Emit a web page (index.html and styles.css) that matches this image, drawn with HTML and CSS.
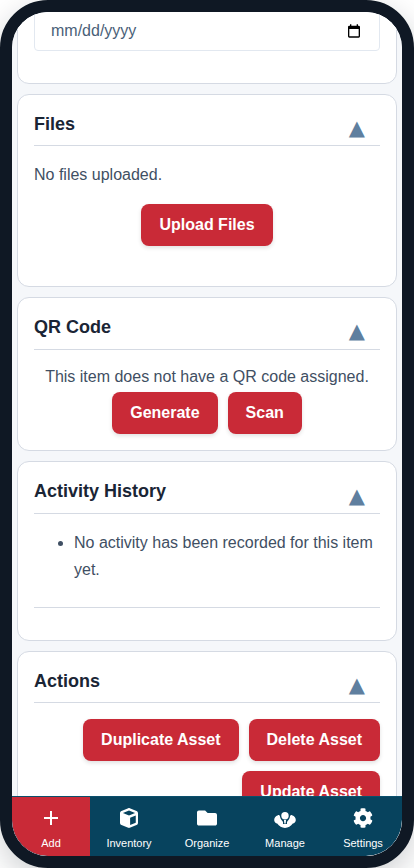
FILE: index.html
```html
<!DOCTYPE html>
<html lang="en">
<head>
<meta charset="utf-8">
<title>Asset</title>
<link rel="stylesheet" href="styles.css">
</head>
<body>
<div class="frame">
  <div class="screen">
    <main class="scroll">
      <section class="card card-date">
        <div class="date-input"><span>mm/dd/yyyy</span>
          <svg class="cal" viewBox="0 0 24 24"><path d="M19 4h-1V2h-2v2H8V2H6v2H5a2 2 0 0 0-2 2v14a2 2 0 0 0 2 2h14a2 2 0 0 0 2-2V6a2 2 0 0 0-2-2zm0 16H5V9h14v11z"/></svg>
        </div>
      </section>
      <section class="card card-files">
        <header class="card-head"><h2>Files</h2><span class="tri">▲</span></header>
        <p class="muted">No files uploaded.</p>
        <div class="center"><button class="btn">Upload Files</button></div>
      </section>
      <section class="card card-qr">
        <header class="card-head"><h2>QR Code</h2><span class="tri">▲</span></header>
        <p class="qr-text">This item does not have a QR code assigned.</p>
        <div class="center gap"><button class="btn">Generate</button><button class="btn">Scan</button></div>
      </section>
      <section class="card card-activity">
        <header class="card-head"><h2>Activity History</h2><span class="tri">▲</span></header>
        <ul class="list"><li>No activity has been recorded for this item yet.</li></ul>
        <hr class="rule">
      </section>
      <section class="card card-actions">
        <header class="card-head"><h2>Actions</h2><span class="tri">▲</span></header>
        <div class="actions"><button class="btn">Duplicate Asset</button><button class="btn">Delete Asset</button><button class="btn">Update Asset</button></div>
      </section>
    </main>
    <nav class="nav">
      <a class="nav-item active"><svg viewBox="0 0 20 20"><path d="M9 3h2v6h6v2h-6v6H9v-6H3V9h6z"/></svg><span>Add</span></a>
      <a class="nav-item"><svg class="cube" viewBox="0 0 512 512" preserveAspectRatio="none"><path d="M234.500 5.700c13.900-5 29.100-5 43.100 0l192 68.600C495 83.400 512 107.500 512 134.600V377.400c0 27-17 51.200-42.500 60.300l-192 68.600c-13.900 5-29.100 5-43.100 0l-192-68.600C17 428.600 0 404.500 0 377.400V134.600c0-27 17-51.200 42.500-60.300l192-68.600zM256 66L82.300 128 256 190l173.700-62L256 66zm32 368.600l160-57.100v-188L288 246.600v188z"/></svg><span>Inventory</span></a>
      <a class="nav-item"><svg viewBox="0 0 512 512"><path d="M464 128H272l-64-64H48C21.490 64 0 85.490 0 112v288c0 26.510 21.490 48 48 48h416c26.510 0 48-21.490 48-48V176c0-26.510-21.490-48-48-48z"/></svg><span>Organize</span></a>
      <a class="nav-item"><svg class="wide" viewBox="0 -4 22 20"><circle cx="11" cy="3.700" r="3.700"/><path d="M10 8h2l-.3 3.500h-1.400z"/><path d="M4 3.200C1.500 4 0 6 .2 8.200c.2 1.800 1.500 3 3 3.400C5 14.300 8 16 11 16s6-1.700 7.800-4.400c1.500-.4 2.800-1.600 3-3.400C22 6 20.500 4 18 3.200c-1-.3-1.800.3-2 1.300-.4 2-1.200 3.500-2.200 4.300l-.8 1.200v2H9v-2L8.200 8.800C7.200 8 6.400 6.500 6 4.500 5.800 3.500 5 2.900 4 3.200z"/></svg><span>Manage</span></a>
      <a class="nav-item"><svg viewBox="0 0 512 512"><path d="M487.400 315.700l-42.600-24.600c4.300-23.200 4.300-47 0-70.200l42.600-24.600c4.900-2.800 7.100-8.600 5.500-14-11.100-35.600-30-67.800-54.700-94.600-3.800-4.100-10-5.100-14.800-2.300L380.800 110c-17.900-15.400-38.500-27.300-60.800-35.100V25.800c0-5.600-3.900-10.500-9.400-11.700-36.700-8.200-74.300-7.800-109.200 0-5.500 1.200-9.400 6.100-9.400 11.700V75c-22.200 7.900-42.800 19.800-60.800 35.100L88.700 85.500c-4.900-2.800-11-1.900-14.800 2.300-24.700 26.700-43.600 58.900-54.700 94.600-1.700 5.400.6 11.200 5.500 14L67.300 221c-4.300 23.200-4.300 47 0 70.200l-42.600 24.600c-4.900 2.800-7.100 8.600-5.500 14 11.100 35.600 30 67.800 54.700 94.600 3.800 4.100 10 5.100 14.800 2.300l42.600-24.600c17.900 15.400 38.500 27.300 60.800 35.100v49.200c0 5.600 3.900 10.500 9.400 11.700 36.700 8.200 74.300 7.800 109.200 0 5.500-1.200 9.400-6.100 9.400-11.700v-49.200c22.200-7.900 42.800-19.800 60.800-35.100l42.600 24.600c4.900 2.800 11 1.900 14.800-2.300 24.700-26.700 43.600-58.900 54.700-94.600 1.500-5.500-.7-11.300-5.600-14.100zM256 336c-44.100 0-80-35.900-80-80s35.900-80 80-80 80 35.900 80 80-35.900 80-80 80z"/></svg><span>Settings</span></a>
    </nav>
  </div>
</div>
</body>
</html>
```
FILE: styles.css
```css
* { box-sizing: border-box; }
html, body { margin: 0; height: 100%; }
body { width: 414px; height: 868px; overflow: hidden; background: #fff; font-family: "Liberation Sans", Arial, sans-serif; }
.frame { width: 414px; height: 868px; border: 12px solid #0f1824; border-radius: 48px; background: #f4f6f9; box-shadow: 0 10px 30px rgba(15,24,36,.2); overflow: hidden; }
.screen { height: 844px; display: flex; flex-direction: column; overflow: hidden; border-radius: 36px; background: #f5f7fa; }
.scroll { flex: 1; min-height: 0; overflow: hidden; padding: 0 5px; display: flex; flex-direction: column; gap: 10.5px; }
.card { flex: none; background: #fff; border: 1px solid #d5dae3; border-radius: 12px; padding: 16px; }
.card-date { margin-top: -24px; height: 95.500px; }
.date-input { height: 42px; margin-top: 4px; border: 1px solid #e2e8f0; border-radius: 4px; padding: 1px 16px 0; display: flex; align-items: center; justify-content: space-between; font-size: 16px; color: #4a5f78; }
.cal { width: 16px; height: 16px; display: block; fill: #000; margin-right: 1px; }
.card-head { display: flex; justify-content: space-between; align-items: flex-start; height: 35px; border-bottom: 1px solid #d5dae3; }
.card-head h2 { margin: 0; font-size: 18px; line-height: 26px; font-weight: 700; color: #1a2535; }
.tri { font-size: 21px; line-height: 24px; margin: 5px 15px 0 0; color: #5f7f9f; font-family: "DejaVu Sans", sans-serif; }
.muted { margin: 17px 0 0; font-size: 16px; line-height: 24px; color: #3f4f63; }
.center { display: flex; justify-content: center; }
.gap { gap: 10px; }
.btn { height: 42px; padding: 0 18px; border: 0; border-radius: 8px; background: #c92a37; color: #fff; font: 700 16px "Liberation Sans", Arial, sans-serif; box-shadow: 0 2px 4px rgba(0,0,0,.12); }
.card-files { height: 192.700px; }
.card-files .center { margin-top: 17px; }
.card-qr { height: 153.400px; }
.card-qr .card-head { height: 36px; }
.qr-text { margin: 15px 0 0; font-size: 16px; line-height: 24px; color: #3f4f63; text-align: center; white-space: nowrap; }
.card-qr .center { margin-top: 3px; }
.card-activity { height: 179.500px; }
.card-activity .card-head { height: 36px; }
.card-activity .tri { margin-top: 6px; }
.list { margin: 15px 0 0; padding: 0 0 0 40px; font-size: 16px; line-height: 27.2px; color: #3f4f63; }
.rule { margin: 24px 0 0; border: 0; border-top: 1px solid #d5dae3; }
.card-actions { height: 220px; }
.actions { display: flex; flex-wrap: wrap; justify-content: flex-end; gap: 10px; margin-top: 16px; }
.nav { flex: none; height: 60px; display: flex; background: #07435e; border-top: 1px solid #0b4f6c; z-index: 2; }
.nav-item { flex: 1; display: flex; flex-direction: column; align-items: center; justify-content: flex-start; padding-top: 11px; color: #fff; font-size: 11px; line-height: 14px; }
.nav-item svg { width: 20px; height: 20px; fill: currentColor; display: block; margin-bottom: 8px; }
.nav-item svg.cube { width: 18px; }
.nav-item svg.wide { width: 22px; }
.nav-item.active { background: #c92a37; }
```
